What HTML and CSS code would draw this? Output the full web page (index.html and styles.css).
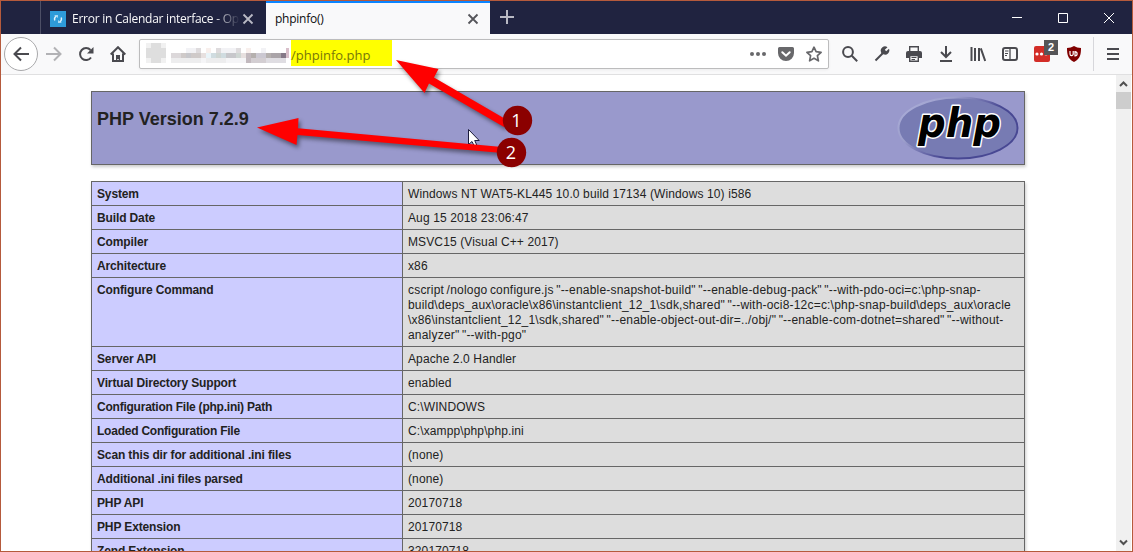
FILE: index.html
```html
<!DOCTYPE html>
<html lang="en">
<head>
    <meta charset="UTF-8">
    <title>phpinfo()</title>
    <link rel="stylesheet" href="styles.css">
</head>
<body>
<div class="window">
    <div class="tabbar">
        <div class="tab first">
            <svg class="favicon" width="16" height="16" viewBox="0 0 16 16">
                <rect width="16" height="16" fill="#2e9bd9"/>
                <path d="M4.800 9.500A3.400 3.400 0 0 1 7.500 4.800M11.200 6.500A3.400 3.400 0 0 1 8.500 11.200" fill="none" stroke="#e4f4fc" stroke-width="1.5"/>
                <path d="M4 4h4v3zM12 12H8V9z" fill="#a9d9f3"/>
            </svg>
            <span class="tab-title">Error in Calendar interface - Op</span>
            <svg class="tab-close" width="12" height="12" viewBox="0 0 12 12"><path d="M1.500 1.500l9 9M10.500 1.500l-9 9" stroke="#b9b9c4" stroke-width="1.800"/></svg>
        </div>
        <div class="tab active">
            <span class="tab-title">phpinfo()</span>
            <svg class="tab-close" width="12" height="12" viewBox="0 0 12 12"><path d="M1.500 1.500l9 9M10.500 1.500l-9 9" stroke="#55555a" stroke-width="1.800"/></svg>
        </div>
        <svg class="new-tab" width="14" height="14" viewBox="0 0 14 14"><path d="M7 0v14M0 7h14" stroke="#b9b9c4" stroke-width="2"/></svg>
        <div class="window-buttons">
            <svg width="46" height="32" viewBox="0 0 46 32"><path d="M18 16.500h10" stroke="#fff"/></svg>
            <svg width="46" height="32" viewBox="0 0 46 32"><path d="M18.500 12.500h9v9h-9z" fill="none" stroke="#fff"/></svg>
            <svg width="46" height="32" viewBox="0 0 46 32"><path d="M18 12l10 10M28 12l-10 10" stroke="#fff"/></svg>
        </div>
    </div>

    <div class="toolbar">
        <div class="back">
            <svg width="16" height="16" viewBox="0 0 16 16"><path d="M16 8H2M8 1.500L1.500 8 8 14.500" class="line"/></svg>
        </div>
        <div class="tool faded"><svg width="16" height="16" viewBox="0 0 16 16"><path d="M0 8h14M8 1.500L14.500 8 8 14.500" class="line"/></svg></div>
        <div class="tool"><svg width="16" height="16" viewBox="0 0 16 16"><path d="M13 11.500A6 6 0 1 1 12.500 4" class="line"/><path d="M15.500 1v6.500H9z" fill="#4a4a4f"/></svg></div>
        <div class="tool"><svg width="16" height="16" viewBox="0 0 16 16"><path d="M.7 8.500L8 1.200l7.300 7.300M3 7.500V15h10V7.500" class="line"/><path d="M6 9h4v6H8.700v-2H7.300v2H6z" fill="#4a4a4f"/></svg></div>

        <div class="urlbar">
            <!-- hidden host name -->
            <svg class="mosaic" width="151" height="24" viewBox="140 42 151 24">
                <path d="M151 43h10v5h5v10h-5v5h-10v-5h-5V48h5z" fill="#dedede"/>
                <path d="M146 43h5v5h-5zM161 43h5v5h-5zM146 58h5v5h-5zM161 58h5v5h-5z" fill="#f1f1f1"/>
                <path d="M196 48h5v5h-5zM216 48h5v5h-5zM236 48h5v5h-5z" fill="#dedbdd"/>
                <path d="M186 48h10v5h-10zM221 48h15v5h-15zM261 48h5v5h-5z" fill="#f2f2f5"/>
                <path d="M246 48h5v5h-5zM206 48h5v5h-5z" fill="#f8efec"/>
                <path d="M171 53h10v5h-10z" fill="#dcd8da"/>
                <path d="M181 53h5v5h-5zM191 53h10v5h-10z" fill="#cfcac9"/>
                <path d="M186 53h5v5h-5zM226 53h10v5h-10z" fill="#c7c7cb"/>
                <path d="M201 53h5v5h-5zM241 53h5v5h-5z" fill="#e7e0df"/>
                <path d="M206 53h5v5h-5z" fill="#e9f4f9"/>
                <path d="M211 53h5v5h-5zM221 53h5v5h-5z" fill="#d0dce0"/>
                <path d="M216 53h5v5h-5zM236 53h5v5h-5z" fill="#cfd6d3"/>
                <path d="M246 53h5v10h-5z" fill="#c2b9be"/>
                <path d="M251 53h5v5h-5zM266 53h5v5h-5z" fill="#b5b0ae"/>
                <path d="M256 53h10v5h-10z" fill="#cbc8d1"/>
                <path d="M271 53h10v5h-10z" fill="#aaa4a8"/>
                <path d="M281 53h5v5h-5z" fill="#857987"/>
                <path d="M286 48h3v10h-3z" fill="#d8bfca"/>
                <path d="M171 58h30v5h-30zM206 58h20v5h-20z" fill="#ededee"/>
                <path d="M201 58h5v5h-5zM226 58h20v5h-20z" fill="#f5f5f7"/>
                <path d="M251 58h15v5h-15z" fill="#d3ced2"/>
                <path d="M266 58h20v5h-20z" fill="#dfdde2"/>
            </svg>
            <span class="path">/phpinfo.php</span>
            <div class="url-actions">
                <svg width="16" height="16" viewBox="0 0 16 16" fill="#68686b"><circle cx="2" cy="8" r="2"/><circle cx="8" cy="8" r="2"/><circle cx="14" cy="8" r="2"/></svg>
                <svg width="16" height="16" viewBox="0 0 16 16"><path d="M1.500 1h13A1.500 1.500 0 0 1 16 2.500V7a8 8 0 0 1-16 0V2.500A1.500 1.500 0 0 1 1.500 1z" fill="#68686b"/><path d="M4.300 6.200L8 9.700l3.700-3.500" fill="none" stroke="#fff" stroke-width="2" stroke-linecap="round"/></svg>
                <svg width="16" height="16" viewBox="0 0 16 16"><path d="M8 1.200l2.100 4.500 5 .6-3.700 3.400 1 5.100L8 12.300l-4.400 2.500 1-5.100L.9 6.300l5-.6z" fill="none" stroke="#68686b" stroke-width="1.700" stroke-linejoin="round"/></svg>
            </div>
        </div>

        <div class="tool"><svg width="16" height="16" viewBox="0 0 16 16"><circle cx="6" cy="6" r="4.900" class="line"/><path d="M9.800 9.800l5.400 5.400" class="line"/></svg></div>
        <div class="tool"><svg width="16" height="16" viewBox="0 0 16 16"><path d="M1.500 14.500l7-7" class="line"/><path d="M13.500 1.200l-2.700 2.500 1.400 1.500L15 2.800a4.200 4.200 0 0 1-5.700 5.400L7.500 7.800 7 6A4.200 4.200 0 0 1 13.500 1.200z" fill="#4a4a4f"/></svg></div>
        <div class="tool"><svg width="16" height="16" viewBox="0 0 16 16"><path d="M2 5h12a2 2 0 0 1 2 2v5H0V7a2 2 0 0 1 2-2z" fill="#4a4a4f"/><path d="M3.700 5V.7h8.600V5M3.700 9.500h8.600v5.800H3.700z" fill="#f9f9fa" stroke="#4a4a4f" stroke-width="1.400"/><path d="M5.500 11.500h5M5.500 13.500h3.500" stroke="#4a4a4f"/></svg></div>
        <div class="tool"><svg width="16" height="16" viewBox="0 0 16 16"><path d="M8 0v10.500M3 6l5 5 5-5M2 15h12" class="line"/></svg></div>
        <div class="tool"><svg width="16" height="16" viewBox="0 0 16 16"><path d="M1.500 1v14M5 2v13M9 2v13M10.800 2.300L15.200 15" class="line"/></svg></div>
        <div class="tool"><svg width="16" height="16" viewBox="0 0 16 16"><rect x="1" y="2" width="14" height="12" rx="2" class="line"/><path d="M8 2v12" stroke="#4a4a4f" stroke-width="1.300"/><path d="M3 5h3.500M3 7.500h3M3 9.500h2" stroke="#4a4a4f"/></svg></div>
        <div class="tool">
            <svg width="16" height="16" viewBox="0 0 16 16"><rect width="16" height="16" rx="2" fill="#d32d27"/><g fill="#fff"><circle cx="3" cy="8" r="1.600"/><circle cx="7.500" cy="8" r="1.600"/><circle cx="12" cy="8" r="1.600" opacity=".8"/></g></svg>
            <span class="badge">2</span>
        </div>
        <div class="tool"><svg width="16" height="16" viewBox="0 0 16 16"><path d="M8 0c2 1.300 4.300 2 7 2 0 6-.5 10.800-7 14C1.500 12.800 1 8 1 2c2.700 0 5-.7 7-2z" fill="#800000"/><path d="M4 5v3a1.600 1.600 0 0 0 3.200 0V5M9 5.600v4.200a2.100 2.100 0 0 0 0-4.200z" fill="none" stroke="#fff" stroke-width="1.200"/></svg></div>
        <div class="separator"></div>
        <div class="tool menu"><svg width="12" height="12" viewBox="0 0 12 12"><path d="M0 1h12M0 6h12M0 11h12" class="line"/></svg></div>
    </div>

    <div class="viewport">
        <div class="page">
            <div class="header">
                <h1>PHP Version 7.2.9</h1>
                <svg class="logo" width="122" height="65" viewBox="0 0 122 65">
                    <defs>
                        <linearGradient id="rim" x1="0" y1="0" x2="1" y2=".6">
                            <stop offset="0" stop-color="#afb2dc"/>
                            <stop offset=".35" stop-color="#9c9ecb"/>
                            <stop offset=".7" stop-color="#484893"/>
                        </linearGradient>
                    </defs>
                    <ellipse cx="61" cy="32" rx="59.500" ry="30.500" fill="#777bb3" stroke="url(#rim)" stroke-width="2"/>
                    <text x="21" y="41" class="logo-text" textLength="83" lengthAdjust="spacingAndGlyphs">php</text>
                </svg>
            </div>
            <table>
                <tr><td class="e">System</td><td class="v">Windows NT WAT5-KL445 10.0 build 17134 (Windows 10) i586</td></tr>
                <tr><td class="e">Build Date</td><td class="v">Aug 15 2018 23:06:47</td></tr>
                <tr><td class="e">Compiler</td><td class="v">MSVC15 (Visual C++ 2017)</td></tr>
                <tr><td class="e">Architecture</td><td class="v">x86</td></tr>
                <tr><td class="e">Configure Command</td><td class="v command">cscript /nologo configure.js "--enable-snapshot-build" "--enable-debug-pack" "--with-pdo-oci=c:\php-snap-<br>build\deps_aux\oracle\x86\instantclient_12_1\sdk,shared" "--with-oci8-12c=c:\php-snap-build\deps_aux\oracle<br>\x86\instantclient_12_1\sdk,shared" "--enable-object-out-dir=../obj/" "--enable-com-dotnet=shared" "--without-<br>analyzer" "--with-pgo"</td></tr>
                <tr><td class="e">Server API</td><td class="v">Apache 2.0 Handler</td></tr>
                <tr><td class="e">Virtual Directory Support</td><td class="v">enabled</td></tr>
                <tr><td class="e tight">Configuration File (php.ini) Path</td><td class="v">C:\WINDOWS</td></tr>
                <tr><td class="e tight">Loaded Configuration File</td><td class="v">C:\xampp\php\php.ini</td></tr>
                <tr><td class="e">Scan this dir for additional .ini files</td><td class="v">(none)</td></tr>
                <tr><td class="e">Additional .ini files parsed</td><td class="v">(none)</td></tr>
                <tr><td class="e">PHP API</td><td class="v">20170718</td></tr>
                <tr><td class="e">PHP Extension</td><td class="v">20170718</td></tr>
                <tr><td class="e">Zend Extension</td><td class="v">320170718</td></tr>
            </table>
        </div>
        <div class="scrollbar">
            <svg width="15" height="17" viewBox="0 0 15 17"><path d="M4 11l3.500-3.500L11 11" fill="none" stroke="#505050" stroke-width="2"/></svg>
            <div class="thumb"></div>
            <svg width="15" height="17" viewBox="0 0 15 17"><path d="M4 6.500L7.500 10 11 6.500" fill="none" stroke="#505050" stroke-width="2"/></svg>
        </div>
    </div>
</div>

<!-- arrows and numbers over the page -->
<svg class="notes" width="1133" height="552" viewBox="0 0 1133 552">
    <path d="M468.500 129.500v15l3.500-3 2.500 5 2.500-1-2.300-5h4.500z" fill="#fff" stroke="#1c1c3c"/>
    <g class="arrow">
        <path d="M396 60l42.500 9-4.500 8.500 74 43-4 6.500-75-43.500-4.500 9.500z"/>
        <path d="M257 127.500l41.500-9.500-.5 10.300 204 18.700v6L297.500 135l-1 10z"/>
    </g>
    <circle cx="517.500" cy="120.500" r="14.700" fill="#8b0000"/>
    <circle cx="511.500" cy="152.500" r="14.700" fill="#8b0000"/>
    <text x="516.500" y="126.500" class="number">1</text>
    <text x="511" y="158.500" class="number">2</text>
</svg>
</body>
</html>
```
FILE: styles.css
```css
body {
    margin: 0;
    overflow: hidden;
    color: #222;
    font-family: "Liberation Sans", Arial, sans-serif;
}
svg {
    flex: none;
    display: block;
}
.window {
    box-sizing: border-box;
    width: 1133px;
    height: 552px;
    border: 1px solid #b55a3c;
    display: flex;
    flex-direction: column;
    overflow: hidden;
    background: #fff;
}

/* tabs */
.tabbar {
    flex: none;
    display: flex;
    height: 33px;
    background: #202340;
    font: 12px/16px "Open Sans", "Noto Sans", sans-serif;
}
.tab {
    box-sizing: border-box;
    display: flex;
    align-items: center;
    width: 224px;
    padding: 2px 11px 0 9px;
    color: #f9f9fa;
}
.tab.first {
    width: 226px;
    margin-left: 39px;
    padding-right: 12px;
    border-left: 1px solid #4d4f66;
}
.tab.active {
    background: #f9f9fa;
    border-top: 2px solid #0a84ff;
    padding-top: 0;
    color: #0c0c0d;
}
.favicon {
    margin-right: 6px;
}
.tab-title {
    flex: 1;
    white-space: nowrap;
    overflow: hidden;
    letter-spacing: -0.25px;
}
.first .tab-title {
    -webkit-mask-image: linear-gradient(to right, #000 142px, transparent 168px);
    mask-image: linear-gradient(to right, #000 142px, transparent 168px);
}
.new-tab {
    margin: 9px 0 0 10px;
}
.window-buttons {
    display: flex;
    margin-left: auto;
}

/* toolbar */
.toolbar {
    flex: none;
    display: flex;
    align-items: center;
    box-sizing: border-box;
    height: 41px;
    padding-left: 3px;
    background: #f9f9fa;
    border-bottom: 1px solid #e0e0e1;
}
.line {
    fill: none;
    stroke: #4a4a4f;
    stroke-width: 2;
}
.back {
    box-sizing: border-box;
    display: flex;
    align-items: center;
    justify-content: center;
    width: 34px;
    height: 34px;
    border: 1px solid #a9a9ab;
    border-radius: 50%;
    background: #fff;
}
.tool {
    position: relative;
    display: flex;
    justify-content: center;
    width: 32px;
}
.faded {
    opacity: 0.4;
}
.urlbar {
    box-sizing: border-box;
    display: flex;
    align-items: center;
    width: 690px;
    height: 30px;
    margin: 0 5px;
    border: 1px solid #bcbcbd;
    border-radius: 2px;
    background: #fff;
    box-shadow: 0 1px 3px rgba(0, 0, 0, 0.06);
}
.path {
    width: 101px;
    height: 26px;
    margin-bottom: 2px;
    background: #ff0;
    color: #77770a;
    font: 13px/31px "Open Sans", "Noto Sans", sans-serif;
}
.url-actions {
    display: flex;
    gap: 12px;
    margin-left: auto;
    padding-right: 6px;
}
.badge {
    position: absolute;
    left: 18px;
    top: -6px;
    width: 14px;
    height: 15px;
    background: #555557;
    color: #fff;
    font: bold 11px/15px "Liberation Sans", Arial, sans-serif;
    text-align: center;
}
.separator {
    width: 1px;
    height: 34px;
    margin: 0 3px;
    background: #d7d7db;
}
.menu svg {
    margin-right: 1px;
}

/* phpinfo page */
.viewport {
    flex: 1;
    display: flex;
    min-height: 0;
}
.page {
    flex: 1;
    overflow: hidden;
}
.header {
    box-sizing: border-box;
    display: flex;
    justify-content: space-between;
    width: 934px;
    height: 74px;
    margin: 16px 0 16px 90px;
    padding: 4px 5px 0 5px;
    background: #99c;
    border: 1px solid #666;
    box-shadow: 1px 2px 3px #ccc;
}
h1 {
    margin: 13px 0 0;
    font-size: 18px;
    line-height: 21px;
}
.logo-text {
    fill: #000;
    stroke: #fff;
    stroke-width: 3px;
    stroke-linejoin: round;
    paint-order: stroke;
    font: italic bold 40px "DejaVu Sans", sans-serif;
}
table {
    width: 934px;
    margin-left: 90px;
    border-collapse: collapse;
    table-layout: fixed;
    box-shadow: 1px 2px 3px #ccc;
}
td {
    border: 1px solid #666;
    padding: 5px 5px 3px;
    font-size: 12px;
    line-height: 15px;
    vertical-align: baseline;
}
.e {
    width: 300px;
    background: #ccf;
    font-weight: bold;
    letter-spacing: -0.13px;
}
.tight {
    letter-spacing: -0.23px;
}
.v {
    background: #ddd;
    white-space: nowrap;
    letter-spacing: 0.12px;
}
.command {
    letter-spacing: 0.2px;
    word-spacing: -1px;
}
.scrollbar {
    display: flex;
    flex-direction: column;
    width: 15px;
    margin-right: 1px;
    background: #f0f0f0;
}
.thumb {
    height: 17px;
    margin-bottom: auto;
    background: #cdcdcd;
}

.notes {
    position: absolute;
    left: 0;
    top: 0;
}
.arrow {
    fill: #f00;
    filter: drop-shadow(2px 3px 2px rgba(0, 0, 0, 0.45));
}
.number {
    fill: #fff;
    font: 18px "Open Sans", "Noto Sans", sans-serif;
    text-anchor: middle;
}
```
